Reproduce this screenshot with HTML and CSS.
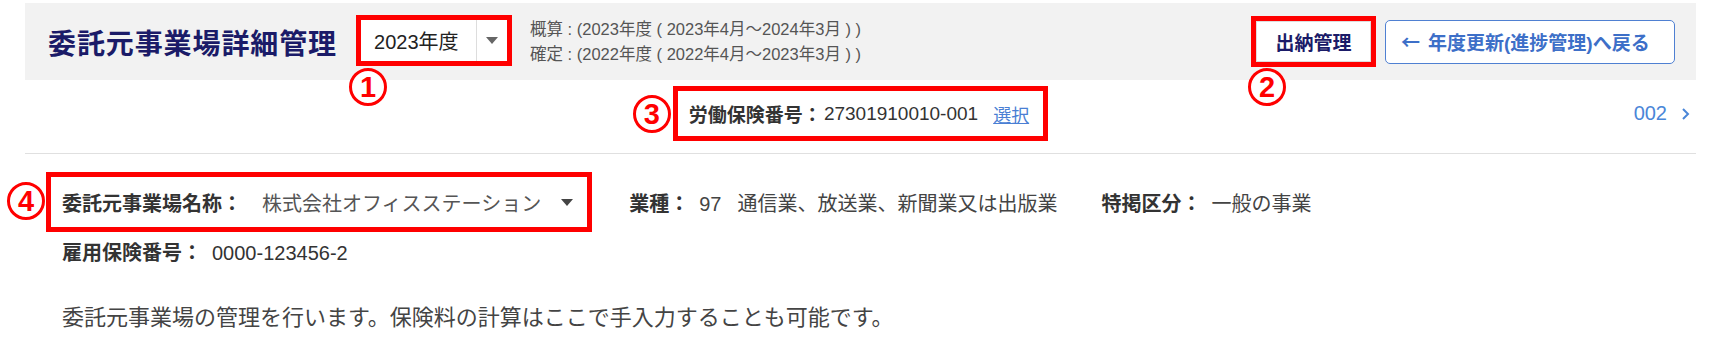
FILE: index.html
```html
<!DOCTYPE html>
<html lang="ja">
<head>
    <meta charset="utf-8" />
    <title>委託元事業場詳細管理</title>
    <meta name="viewport" content="width=device-width, initial-scale=1">
    <link rel="stylesheet" href="styles.css">
</head>
<body>
<div class="page">
    <div class="header">
        <h1 class="title">委託元事業場詳細管理</h1>
        <div class="mark mark-year">
            <div class="year-select">
                <span class="year-value">2023年度</span>
                <span class="year-arrow"><span class="caret"></span></span>
            </div>
            <span class="num num-1">1</span>
        </div>
        <div class="periods">
            <div>概算 : (2023年度 ( 2023年4月～2024年3月 ) )</div>
            <div>確定 : (2022年度 ( 2022年4月～2023年3月 ) )</div>
        </div>
        <div class="mark mark-cash">
            <div class="btn-cash">出納管理</div>
            <span class="num num-2">2</span>
        </div>
        <div class="btn-back"><span class="back-arrow">←</span>年度更新(進捗管理)へ戻る</div>
    </div>

    <div class="ins-row">
        <div></div>
        <div class="mark mark-ins">
            <span class="label">労働保険番号：</span><span class="ins-no">27301910010-001</span><a class="link" href="#">選択</a>
            <span class="num num-3">3</span>
        </div>
        <div class="pager">
            <span>002</span>
            <svg width="9" height="14" viewBox="0 0 9 14"><path d="M2 2l5 5-5 5" fill="none" stroke="#4a86d8" stroke-width="2"/></svg>
        </div>
    </div>

    <div class="info-row">
        <div class="mark mark-name">
            <span class="label">委託元事業場名称：</span>
            <span class="name-value">株式会社オフィスステーション</span>
            <span class="caret caret-dark"></span>
            <span class="num num-4">4</span>
        </div>
        <div class="info-item"><span class="label">業種：</span><span class="code">97</span>通信業、放送業、新聞業又は出版業</div>
        <div class="info-item"><span class="label">特掲区分：</span>一般の事業</div>
    </div>

    <div class="info-line"><span class="label">雇用保険番号：</span>0000-123456-2</div>

    <p class="desc">委託元事業場の管理を行います。保険料の計算はここで手入力することも可能です。</p>
</div>
</body>
</html>
```

FILE: styles.css
```css
body {
    margin: 0;
    font-family: "Liberation Sans", "Noto Sans CJK JP", sans-serif;
    color: #333;
    background: #fff;
}
.page {
    margin: 3px 29px 0 25px;
}

/* annotation marks */
.mark {
    position: relative;
    border: 5px solid #f00;
    box-sizing: border-box;
}
.num {
    position: absolute;
    width: 38px;
    height: 38px;
    box-sizing: border-box;
    border: 3px solid #f00;
    border-radius: 50%;
    background: #fff;
    display: flex;
    align-items: center;
    justify-content: center;
    font: bold 29px/1 "Liberation Sans", sans-serif;
    color: #f00;
}
.num-1 { left: -12px; top: 48px; }
.num-2 { left: -8px; top: 47px; }
.num-3 { left: -45px; top: 4px; }
.num-4 { left: -44px; top: 5px; }

/* header */
.header {
    display: flex;
    align-items: center;
    height: 77px;
    background: #f2f2f2;
    padding: 0 21px 0 23px;
}
.title {
    margin: 0 19px 0 0;
    font-size: 28px;
    letter-spacing: .9px;
    font-weight: bold;
    color: #1b1b68;
}
.mark-year {
    margin-top: -2px;
}
.year-select {
    display: flex;
    width: 146px;
    height: 41px;
    background: #fff;
    font-size: 20px;
    color: #222;
}
.year-value {
    flex: 1;
    display: flex;
    align-items: center;
    padding-left: 13px;
}
.year-arrow {
    width: 30px;
    display: flex;
    align-items: center;
    justify-content: center;
    border-left: 1px solid #ddd;
}
.caret {
    display: inline-block;
    width: 0;
    height: 0;
    border-left: 6px solid transparent;
    border-right: 6px solid transparent;
    border-top: 7px solid #666;
}
.periods {
    margin-left: 18px;
    font-size: 16.5px;
    line-height: 25px;
    color: #555;
}
.mark-cash {
    margin-left: auto;
}
.btn-cash {
    width: 115px;
    height: 41px;
    box-sizing: border-box;
    border: 1px solid #ddd;
    background: #fff;
    display: flex;
    align-items: center;
    justify-content: center;
    font-size: 19px;
    font-weight: bold;
    color: #1b1b68;
}
.btn-back {
    margin-left: 9px;
    width: 290px;
    height: 44px;
    box-sizing: border-box;
    border: 1.5px solid #4f80d2;
    border-radius: 5px;
    background: #fff;
    display: flex;
    align-items: center;
    padding-left: 15px;
    font-size: 19px;
    font-weight: bold;
    color: #3d6fc8;
}
.back-arrow {
    font-family: "Noto Sans CJK JP", sans-serif;
    margin-right: 8px;
}

/* insurance number row */
.ins-row {
    display: grid;
    grid-template-columns: 1fr auto 1fr;
    align-items: center;
    padding: 6px 0 12px;
    border-bottom: 1px solid #e0e0e0;
}
.mark-ins {
    display: flex;
    align-items: center;
    height: 55px;
    padding: 0 14px 0 11px;
    font-size: 19px;
}
.label {
    font-weight: bold;
    color: #333;
}
.ins-no {
    margin-left: 2px;
}
.link {
    margin-left: 15px;
    color: #4a7fd4;
    font-size: 18px;
}
.pager {
    justify-self: end;
    display: flex;
    align-items: center;
    gap: 14px;
    padding-right: 6px;
    font-size: 20px;
    color: #4a86d8;
}

/* business info */
.info-row {
    display: flex;
    align-items: center;
    margin-top: 18px;
    padding-left: 21px;
    font-size: 20px;
}
.mark-name {
    display: flex;
    align-items: center;
    height: 60px;
    padding: 0 14px 0 11px;
}
.name-value {
    margin-left: 20px;
    color: #555;
}
.caret-dark {
    margin-left: 20px;
    border-top-color: #444;
}
.info-item {
    margin-left: 37px;
    color: #444;
}
.info-item + .info-item {
    margin-left: 44px;
}
.info-item .label {
    margin-right: 10px;
}
.code {
    margin-right: 16px;
}
.info-line {
    margin-top: 7px;
    padding-left: 37px;
    font-size: 20px;
    line-height: 28px;
    color: #333;
}
.info-line .label {
    margin-right: 10px;
}
.desc {
    margin: 36px 0 0;
    padding-left: 37px;
    font-size: 22px;
    line-height: 30px;
    color: #444;
}
```
